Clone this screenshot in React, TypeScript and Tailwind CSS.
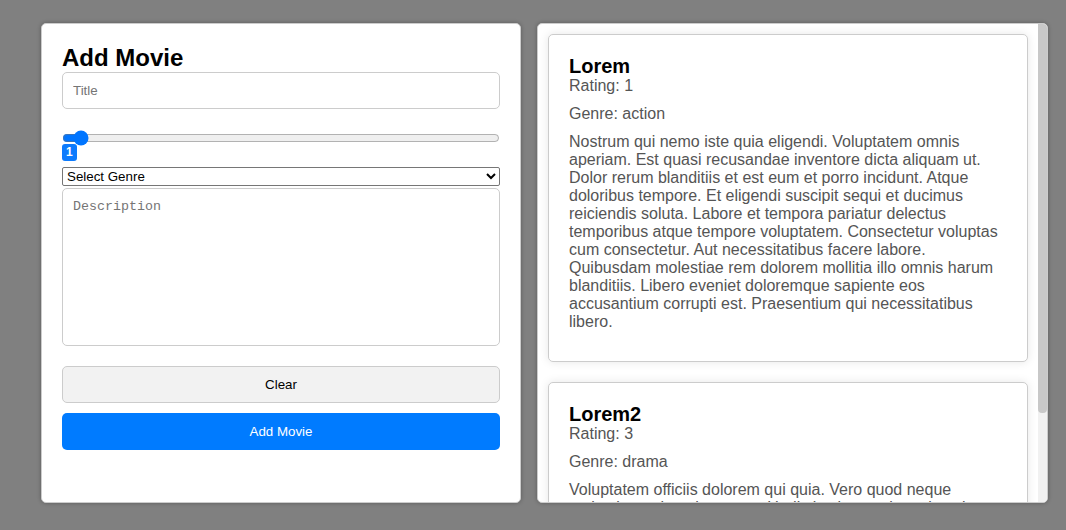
import { useState } from 'react'

interface Movie {
  title: string
  rating: number
  genre: string
  description: string
}

const movies: Movie[] = [
  {
    title: 'Lorem',
    rating: 1,
    genre: 'action',
    description:
      'Nostrum qui nemo iste quia eligendi. Voluptatem omnis aperiam. Est quasi recusandae inventore dicta aliquam ut. Dolor rerum blanditiis et est eum et porro incidunt. Atque doloribus tempore. Et eligendi suscipit sequi et ducimus reiciendis soluta. Labore et tempora pariatur delectus temporibus atque tempore voluptatem. Consectetur voluptas cum consectetur. Aut necessitatibus facere labore. Quibusdam molestiae rem dolorem mollitia illo omnis harum blanditiis. Libero eveniet doloremque sapiente eos accusantium corrupti est. Praesentium qui necessitatibus libero.',
  },
  {
    title: 'Lorem2',
    rating: 3,
    genre: 'drama',
    description:
      'Voluptatem officiis dolorem qui quia. Vero quod neque molestiae ratione harum et. Ut distinctio eveniet quia voluptas assumenda. Sed et iusto aut nihil dolor ut. Quo ab consequatur rerum ea quia omnis. Explicabo sunt delectus voluptatem et.',
  },
]

function MovieCard({ movie }: { movie: Movie }) {
  return (
    <div className="m-[10px] shrink-0 rounded-[5px] border border-[#ccc] bg-white p-5 shadow-[0_0_10px_rgba(0,0,0,0.1)]">
      <h2 className="text-[20px] font-bold leading-[22px] text-black">{movie.title}</h2>
      <p className="text-[#555]">Rating: {movie.rating}</p>
      <p className="mt-[10px] text-[#555]">Genre: {movie.genre}</p>
      <p className="my-[10px] text-[#555]">{movie.description}</p>
    </div>
  )
}

export default function App() {
  const [rating, setRating] = useState(1)

  return (
    <div className="flex h-[530px] items-start gap-4 bg-[#808080] pl-[41px] pt-[23px] font-['Liberation_Sans',Arial,sans-serif] text-[16px] leading-[normal]">
      {/* Form */}
      <div className="h-[480px] w-[480px] shrink-0 rounded-[5px] border border-[#ccc] bg-white p-5 shadow-[0_0_4px_rgba(0,0,0,0.3)]">
        <h1 className="text-[24px] font-bold leading-[27px] text-black">Add Movie</h1>
        <input
          type="text"
          placeholder="Title"
          className="mt-px block h-[37px] w-full rounded-[5px] border border-[#ccc] px-[10px] text-[13.33px] placeholder:text-[#757575]"
        />
        <input
          type="range"
          min={0}
          max={40}
          value={rating}
          onChange={(e) => setRating(Number(e.target.value))}
          className="mt-[21px] block h-4 w-full"
        />
        <span className="-mt-[2px] block h-[17px] w-fit rounded-[3px] bg-[#0d7bfd] px-[4px] text-[12px] font-bold leading-[17px] text-white">
          {rating}
        </span>
        <select className="mt-[6px] block h-[19px] w-full rounded-[2px] border border-[#767676] bg-white text-[13.33px] text-black">
          <option>Select Genre</option>
          <option>action</option>
          <option>drama</option>
          <option>comedy</option>
        </select>
        <textarea
          placeholder="Description"
          className="mt-[2px] block h-[158px] w-full resize-none rounded-[5px] border border-[#ccc] px-[10px] py-[10px] font-['Liberation_Mono',monospace] text-[13.33px] placeholder:text-[#757575]"
        />
        <button
          type="button"
          className="mt-5 block h-[37px] w-full rounded-[5px] border border-[#ccc] bg-[#f2f2f2] text-[13.33px] text-black"
        >
          Clear
        </button>
        <button
          type="button"
          className="mt-[10px] block h-[37px] w-full rounded-[5px] bg-[#007bff] text-[13.33px] text-white"
        >
          Add Movie
        </button>
      </div>

      {/* List */}
      <div className="flex h-[480px] w-[511px] shrink-0 overflow-hidden rounded-[5px] border border-[#ccc] bg-white shadow-[0_0_4px_rgba(0,0,0,0.3)]">
        <div className="flex min-w-0 flex-1 flex-col overflow-hidden">
          {movies.map((m) => (
            <MovieCard key={m.title} movie={m} />
          ))}
        </div>
        {/* scrollbar */}
        <div className="flex w-[9px] shrink-0 flex-col bg-[#f1f1f1]">
          <div className="h-[389px] rounded-b-[4px] bg-[#c8c8c8]" />
        </div>
      </div>
    </div>
  )
}
